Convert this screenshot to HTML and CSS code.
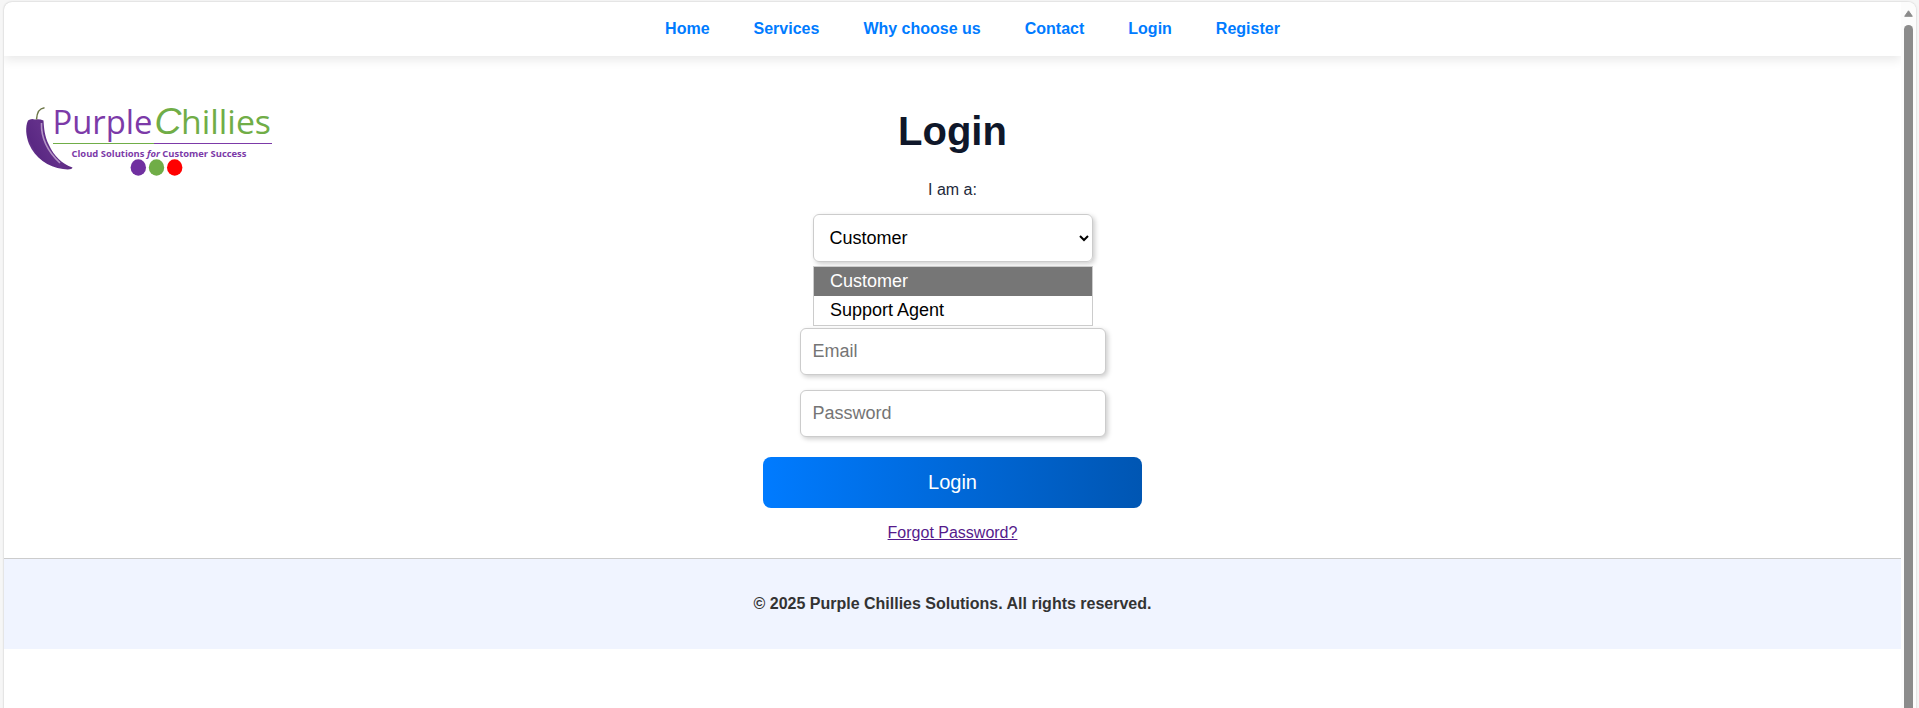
FILE: index.html
```html
<!DOCTYPE html>
<html lang="en">
<head>
<meta charset="utf-8">
<title>Login - Purple Chillies</title>
<link rel="stylesheet" href="styles.css">
</head>
<body>
<div class="window">
  <div class="page">
    <nav class="nav">
      <a href="#">Home</a><a href="#">Services</a><a href="#">Why choose us</a><a href="#">Contact</a><a href="#">Login</a><a href="#">Register</a>
    </nav>
    <main class="main">
      <svg class="logo" width="256" height="80" viewBox="20 100 256 80">
        <defs>
          <linearGradient id="chilli" x1="0" y1="0.6" x2="0.7" y2="0.2">
            <stop offset="0" stop-color="#7d4aa0"/><stop offset=".2" stop-color="#5a2883"/><stop offset=".6" stop-color="#63308a"/><stop offset="1" stop-color="#5a2880"/>
          </linearGradient>
        </defs>
        <path d="M28 120.500Q31 118 35 119.500Q39 118.500 43.500 120.500C44 128 44.500 136 49 145C54 156 62 164 72.500 167.500C72.500 169.500 68 169.800 63 169C48 167 35 158 29 144C26 136 25 127 28 120.500Z" fill="url(#chilli)"/>
        <path d="M41.500 123C41 137 46 150 60 163" fill="none" stroke="#b494c6" stroke-width="1.600"/>
        <path d="M36.500 119.500C37 112 39 108.500 44.500 107.800" fill="none" stroke="#6d7748" stroke-width="1.500"/>
        <text class="logo-word purple" x="52.500" y="134" textLength="100" lengthAdjust="spacingAndGlyphs">Purple</text>
        <text class="logo-cap" x="154.500" y="134" textLength="27" lengthAdjust="spacingAndGlyphs">C</text>
        <text class="logo-word green" x="181" y="134" textLength="90" lengthAdjust="spacingAndGlyphs">hillies</text>
        <path d="M53 143.500H154" stroke="#70ad47" stroke-width="1.200"/>
        <path d="M154 143.500H272" stroke="#7c3aa8" stroke-width="1.200"/>
        <text class="logo-tag" x="71.500" y="157" textLength="175" lengthAdjust="spacingAndGlyphs">Cloud Solutions <tspan font-style="italic">for</tspan> Customer Success</text>
        <ellipse cx="138.300" cy="167.500" rx="7.700" ry="8.200" fill="#7030a0"/>
        <ellipse cx="156.500" cy="167.500" rx="7.700" ry="8.200" fill="#70ad47"/>
        <ellipse cx="174.700" cy="167.500" rx="7.700" ry="8.200" fill="#ff0000"/>
      </svg>
      <form class="form">
        <h1>Login</h1>
        <div class="label">I am a:</div>
        <div class="select">
          <span>Customer</span>
          <svg width="10" height="7" viewBox="0 0 10 7"><path d="M1 1L5 5L9 1" fill="none" stroke="#000" stroke-width="2"/></svg>
          <div class="options">
            <div class="option selected">Customer</div>
            <div class="option">Support Agent</div>
          </div>
        </div>
        <input class="field" type="email" placeholder="Email">
        <input class="field" type="password" placeholder="Password">
        <button class="submit" type="button">Login</button>
        <a class="forgot" href="#">Forgot Password?</a>
      </form>
    </main>
    <footer class="footer">© 2025 Purple Chillies Solutions. All rights reserved.</footer>
  </div>
  <div class="scrollbar">
    <svg width="9" height="7" viewBox="0 0 9 7"><path d="M4.500 .8L8.300 6.300H.7Z" fill="#8b8b8b" stroke="#8b8b8b" stroke-linejoin="round"/></svg>
    <div class="thumb"></div>
  </div>
</div>
</body>
</html>
```
FILE: styles.css
```css
* { box-sizing: border-box; }
body {
  margin: 0;
  height: 708px;
  overflow: hidden;
  padding: 2px 3px 0 4px;
  background: #f6f6f6;
  font: 16px/18px "Liberation Sans", Arial, sans-serif;
}
.window {
  display: flex;
  height: 720px;
  background: #fff;
  border-radius: 8px 8px 0 0;
  box-shadow: 0 0 2px rgba(0, 0, 0, .25);
  overflow: hidden;
}
.page { width: 1897px; }
.nav {
  display: flex;
  justify-content: center;
  align-items: center;
  gap: 44px;
  height: 54px;
  padding: 0 0 0 40px;
  box-shadow: 0 4px 10px rgba(0, 0, 0, .09);
}
.nav a { color: #007bff; font-weight: bold; text-decoration: none; }
.main {
  display: grid;
  grid-template-columns: 1fr 379px 1fr;
  height: 502px;
}
.logo { margin: 44px 0 0 16px; overflow: visible; }
.form {
  display: flex;
  flex-direction: column;
  align-items: center;
}
h1 {
  margin: 52px 0 0;
  font-size: 40px;
  line-height: 46px;
  color: #0f172a;
}
.label { margin: 27px 0 15px; color: #1e293b; }
.select {
  position: relative;
  display: flex;
  align-items: center;
  justify-content: space-between;
  width: 280px;
  height: 48px;
  padding: 0 3px 0 16px;
  margin-bottom: 66px;
  border: 1px solid #ccc;
  border-radius: 6px;
  box-shadow: 2px 2px 5px rgba(0, 0, 0, .2);
  font-size: 18px;
}
.options {
  position: absolute;
  top: 51px;
  left: -1px;
  width: 280px;
  border: 1px solid #ccc;
  background: #fff;
}
.option { height: 29px; padding-left: 16.500px; line-height: 28px; }
.selected { background: #767676; color: #fff; }
.field {
  width: 306px;
  height: 47px;
  margin: 0 0 15px;
  padding: 0 12px 1px;
  border: 1px solid #ccc;
  border-radius: 6px;
  box-shadow: 2px 2px 5px rgba(0, 0, 0, .2);
  font: 18px "Liberation Sans", Arial, sans-serif;
}
.field::placeholder { color: #757575; }
.submit {
  width: 379px;
  height: 51px;
  margin: 5px 0 16px;
  border: 0;
  border-radius: 8px;
  background: linear-gradient(90deg, #007bff, #0056b3);
  color: #fff;
  font: 20px "Liberation Sans", Arial, sans-serif;
}
.forgot { color: #551a8b; }
.footer {
  height: 91px;
  padding-top: 36px;
  border-top: 1px solid #ccc;
  background: #f0f4ff;
  color: #333;
  font-weight: bold;
  text-align: center;
}
.scrollbar {
  display: flex;
  flex-direction: column;
  align-items: center;
  gap: 8px;
  width: 15px;
  padding-top: 8px;
  background: #fcfcfc;
}
.thumb { width: 9px; flex: 1; border-radius: 5px; background: #8b8b8b; }
.logo-word { font: 33px "Open Sans", sans-serif; }
.logo-cap { font: italic 37px "Liberation Sans", sans-serif; fill: #70ad47; }
.logo-tag { font: bold 9.500px "Open Sans", sans-serif; fill: #7c3aa8; }
.purple { fill: #7c3aa8; }
.green { fill: #70ad47; }
```
